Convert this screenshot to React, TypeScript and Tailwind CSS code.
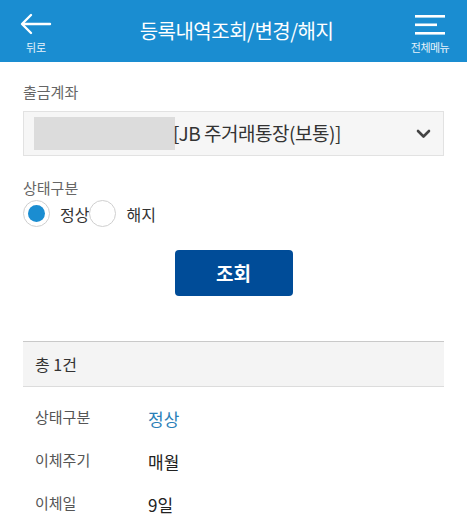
import React, { useState } from "react";

const font = { fontFamily: '"Noto Sans CJK KR", "Noto Sans", sans-serif' };

export default function App() {
  const [status, setStatus] = useState<"normal" | "cancel">("normal");

  const rows = [
    { label: "상태구분", value: "정상", blue: true },
    { label: "이체주기", value: "매월" },
    { label: "이체일", value: "9일" },
  ];

  return (
    <div className="w-[467px] h-[523px] bg-white overflow-hidden" style={font}>
      {/* Header */}
      <div className="h-[62px] bg-[#1a8dd1] flex items-center justify-between px-[12px] text-white">
        <button className="w-[48px] flex flex-col items-center pt-[4px]">
          <svg width="32" height="22" viewBox="0 0 32 22" fill="none" stroke="white" strokeWidth="2.4" strokeLinecap="round" strokeLinejoin="round">
            <path d="M30 11H3" />
            <path d="M11 2L2 11l9 9" />
          </svg>
          <span className="text-[11px] leading-none mt-[7px] text-white/90">뒤로</span>
        </button>
        <h1 className="text-[20px] font-normal tracking-tight ml-[8px]">등록내역조회/변경/해지</h1>
        <button className="w-[50px] flex flex-col items-center pt-[4px]">
          <svg width="30" height="22" viewBox="0 0 30 22" fill="white">
            <rect x="0" y="1" width="30" height="2.6" />
            <rect x="0" y="9.5" width="22" height="2.6" />
            <rect x="0" y="18" width="30" height="2.6" />
          </svg>
          <span className="text-[11px] leading-none mt-[6px] tracking-tighter text-white/90">전체메뉴</span>
        </button>
      </div>

      <div className="px-[23px]">
        {/* Account */}
        <div className="pt-[22px] text-[15px] text-[#666] leading-none">출금계좌</div>
        <div className="mt-[12px] h-[45px] bg-[#f6f6f6] border border-[#e2e2e2] flex items-center pl-[10px] pr-[12px]">
          <div className="w-[141px] h-[33px] bg-[#dcdcdc]" />
          <span className="text-[19px] text-[#333] -ml-[2px] tracking-tight">[JB 주거래통장(보통)]</span>
          <svg className="ml-auto" width="15" height="10" viewBox="0 0 15 10" fill="none" stroke="#444" strokeWidth="2.6" strokeLinecap="round" strokeLinejoin="round">
            <path d="M2 2l5.5 5.5L13 2" />
          </svg>
        </div>

        {/* Status */}
        <div className="mt-[24px] text-[15px] text-[#666] leading-none">상태구분</div>
        <div className="mt-[5px] flex items-center">
          <button onClick={() => setStatus("normal")} className="flex items-center">
            <span className="w-[27px] h-[27px] rounded-full border border-[#cfcfcf] bg-white flex items-center justify-center">
              {status === "normal" && <span className="w-[17px] h-[17px] rounded-full bg-[#1a8dd1]" />}
            </span>
            <span className="ml-[10px] text-[16px] text-[#333]">정상</span>
          </button>
          <button onClick={() => setStatus("cancel")} className="flex items-center">
            <span className="w-[27px] h-[27px] rounded-full border border-[#cfcfcf] bg-white flex items-center justify-center">
              {status === "cancel" && <span className="w-[17px] h-[17px] rounded-full bg-[#1a8dd1]" />}
            </span>
            <span className="ml-[10px] text-[16px] text-[#333]">해지</span>
          </button>
        </div>

        {/* Search button */}
        <div className="mt-[23px] flex justify-center">
          <button className="w-[118px] h-[46px] rounded-[4px] bg-[#004c98] text-white text-[19px] font-bold">조회</button>
        </div>

        {/* Result header */}
        <div className="mt-[45px] h-[46px] bg-[#f4f4f4] border-t border-t-[#c9c9c9] border-b border-b-[#dcdcdc] flex items-center px-[12px]">
          <span className="text-[16px] text-[#333]">총 1건</span>
        </div>

        {/* Rows */}
        <div className="px-[12px] pt-[19px]">
          {rows.map((r) => (
            <div key={r.label} className="h-[43px] flex items-start">
              <span className="w-[113px] text-[15px] text-[#555]">{r.label}</span>
              <span className={`text-[17px] ${r.blue ? "text-[#2a7fb8]" : "text-[#222]"}`}>{r.value}</span>
            </div>
          ))}
        </div>
      </div>
    </div>
  );
}
